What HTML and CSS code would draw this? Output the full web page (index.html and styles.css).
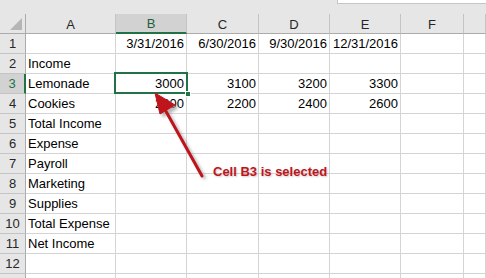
FILE: index.html
```html
<!DOCTYPE html>
<html lang="en">

<head>
    <title>Budget Sheet</title>
    <link rel="stylesheet" href="styles.css">
</head>

<body>
    <div class="sheet">
        <!-- Formula bar edge -->
        <div class="topbar">
            <div class="formula-box"></div>
        </div>

        <!-- Grid -->
        <div class="grid">
            <div class="hdr corner"><span class="corner-tri"></span></div>
            <div class="hdr col">A</div>
            <div class="hdr col active">B</div>
            <div class="hdr col">C</div>
            <div class="hdr col">D</div>
            <div class="hdr col">E</div>
            <div class="hdr col">F</div>
            <div class="hdr col"></div>

            <div class="hdr row">1</div>
            <div class="cell"></div>
            <div class="cell num">3/31/2016</div>
            <div class="cell num">6/30/2016</div>
            <div class="cell num">9/30/2016</div>
            <div class="cell num">12/31/2016</div>
            <div class="cell"></div>
            <div class="cell"></div>

            <div class="hdr row">2</div>
            <div class="cell">Income</div>
            <div class="cell"></div>
            <div class="cell"></div>
            <div class="cell"></div>
            <div class="cell"></div>
            <div class="cell"></div>
            <div class="cell"></div>

            <div class="hdr row active">3</div>
            <div class="cell">Lemonade</div>
            <div class="cell num selected">3000<span class="handle"></span></div>
            <div class="cell num">3100</div>
            <div class="cell num">3200</div>
            <div class="cell num">3300</div>
            <div class="cell"></div>
            <div class="cell"></div>

            <div class="hdr row">4</div>
            <div class="cell">Cookies</div>
            <div class="cell num">2000</div>
            <div class="cell num">2200</div>
            <div class="cell num">2400</div>
            <div class="cell num">2600</div>
            <div class="cell"></div>
            <div class="cell"></div>

            <div class="hdr row">5</div>
            <div class="cell">Total Income</div>
            <div class="cell"></div>
            <div class="cell"></div>
            <div class="cell"></div>
            <div class="cell"></div>
            <div class="cell"></div>
            <div class="cell"></div>

            <div class="hdr row">6</div>
            <div class="cell">Expense</div>
            <div class="cell"></div>
            <div class="cell"></div>
            <div class="cell"></div>
            <div class="cell"></div>
            <div class="cell"></div>
            <div class="cell"></div>

            <div class="hdr row">7</div>
            <div class="cell">Payroll</div>
            <div class="cell"></div>
            <div class="cell"></div>
            <div class="cell"></div>
            <div class="cell"></div>
            <div class="cell"></div>
            <div class="cell"></div>

            <div class="hdr row">8</div>
            <div class="cell">Marketing</div>
            <div class="cell"></div>
            <div class="cell"></div>
            <div class="cell"></div>
            <div class="cell"></div>
            <div class="cell"></div>
            <div class="cell"></div>

            <div class="hdr row">9</div>
            <div class="cell">Supplies</div>
            <div class="cell"></div>
            <div class="cell"></div>
            <div class="cell"></div>
            <div class="cell"></div>
            <div class="cell"></div>
            <div class="cell"></div>

            <div class="hdr row">10</div>
            <div class="cell">Total Expense</div>
            <div class="cell"></div>
            <div class="cell"></div>
            <div class="cell"></div>
            <div class="cell"></div>
            <div class="cell"></div>
            <div class="cell"></div>

            <div class="hdr row">11</div>
            <div class="cell">Net Income</div>
            <div class="cell"></div>
            <div class="cell"></div>
            <div class="cell"></div>
            <div class="cell"></div>
            <div class="cell"></div>
            <div class="cell"></div>

            <div class="hdr row">12</div>
            <div class="cell"></div>
            <div class="cell"></div>
            <div class="cell"></div>
            <div class="cell"></div>
            <div class="cell"></div>
            <div class="cell"></div>
            <div class="cell"></div>

            <div class="hdr row"></div>
            <div class="cell"></div>
            <div class="cell"></div>
            <div class="cell"></div>
            <div class="cell"></div>
            <div class="cell"></div>
            <div class="cell"></div>
            <div class="cell"></div>
        </div>

        <!-- Callout arrow pointing at the active cell -->
        <svg class="callout-arrow" width="486" height="278" viewBox="0 0 486 278">
            <defs>
                <filter id="soft" x="-20%" y="-20%" width="140%" height="140%">
                    <feGaussianBlur stdDeviation="1.5" />
                </filter>
            </defs>
            <g fill="#9a9a9a" stroke="#9a9a9a" filter="url(#soft)" opacity="0.7" transform="translate(3 3)">
                <line x1="202" y1="176" x2="163" y2="106" stroke-width="3" />
                <polygon points="155,93 175,105 160,114" />
            </g>
            <g fill="#c0141c" stroke="#c0141c">
                <line x1="202" y1="176" x2="163" y2="106" stroke-width="3" stroke-linecap="round" />
                <polygon points="155,93 175,105 160,114" />
            </g>
        </svg>
        <div class="callout-text">Cell B3 is selected</div>
    </div>
</body>

</html>
```

FILE: styles.css
```css
/* Reset */
* {
    margin: 0;
    padding: 0;
    box-sizing: border-box;
}

body {
    font-family: 'Liberation Sans', Arial, sans-serif;
    font-size: 13px;
    background-color: #ffffff;
    color: #000000;
}

.sheet {
    position: relative;
    width: 486px;
    height: 278px;
    overflow: hidden;
}

/* Strip under the ribbon with the formula box edge */
.topbar {
    height: 14px;
    background-color: #e6e6e6;
    display: flex;
    justify-content: flex-end;
}

.formula-box {
    width: 149px;
    height: 4px;
    background-color: #ffffff;
    border-left: 1px solid #c6c6c6;
    border-bottom: 1px solid #c6c6c6;
}

/* Spreadsheet grid */
.grid {
    display: grid;
    grid-template-columns: 26px 90px 71px 72px 71px 71px 63px 22px;
    grid-auto-rows: 20px;
}

.hdr {
    background-color: #e6e6e6;
    color: #262626;
    display: flex;
    align-items: center;
    justify-content: center;
}

.hdr.col {
    border-right: 1px solid #c4c4c4;
    border-bottom: 1px solid #ababab;
    padding-top: 1px;
}

.hdr.col.active {
    background-color: #d2d2d2;
    color: #1f5f3a;
    border-bottom: 2px solid #217346;
}

.hdr.row {
    border-right: 1px solid #ababab;
    border-bottom: 1px solid #c4c4c4;
}

.hdr.row.active {
    background-color: #d2d2d2;
    color: #217346;
    border-right: 2px solid #217346;
}

.corner {
    position: relative;
    border-right: 1px solid #ababab;
    border-bottom: 1px solid #ababab;
}

.corner-tri {
    position: absolute;
    right: 3px;
    bottom: 3px;
    width: 0;
    height: 0;
    border-left: 12px solid transparent;
    border-bottom: 12px solid #b5b5b5;
}

.cell {
    border-right: 1px solid #d4d4d4;
    border-bottom: 1px solid #d4d4d4;
    padding: 0 2px;
    display: flex;
    align-items: center;
    white-space: nowrap;
}

.cell.num {
    justify-content: flex-end;
}

.cell.selected {
    position: relative;
}

.cell.selected::after {
    content: '';
    position: absolute;
    top: -2px;
    left: -2px;
    right: -2px;
    bottom: -1px;
    border: 2px solid #217346;
}

.handle {
    position: absolute;
    right: -5px;
    bottom: -4px;
    width: 6px;
    height: 6px;
    background-color: #217346;
    border: 1px solid #ffffff;
    z-index: 1;
}

/* Callout */
.callout-arrow {
    position: absolute;
    top: 0;
    left: 0;
}

.callout-text {
    position: absolute;
    left: 213px;
    top: 164px;
    font-weight: bold;
    color: #c0141c;
    text-shadow: 1px 1px 2px rgba(0, 0, 0, 0.2);
}
```
